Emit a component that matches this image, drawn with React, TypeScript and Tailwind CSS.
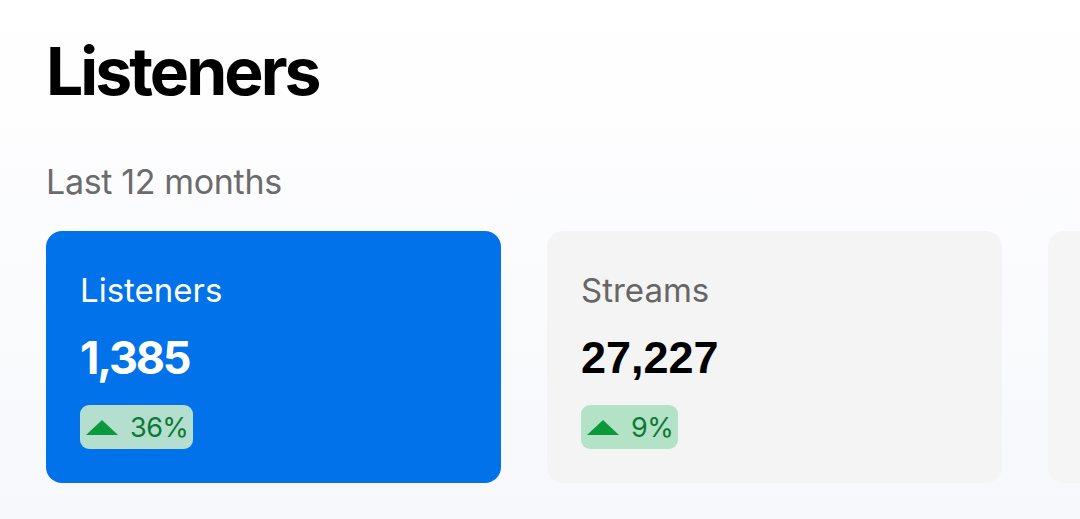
const stats = [
  { label: "Listeners", value: "1,385", change: "36%", active: true },
  { label: "Streams", value: "27,227", change: "9%", active: false },
];

function UpTriangle() {
  return (
    <svg width="32" height="15" viewBox="0 0 32 15" className="shrink-0">
      <path d="M16 0 L32 15 L0 15 Z" fill="#0a9a3c" />
    </svg>
  );
}

export default function App() {
  return (
    <div
      className="h-[519px] w-[1080px] overflow-hidden bg-gradient-to-b from-white to-[#f7f8fc] pl-[46px] pt-[38px]"
      style={{ fontFamily: "Inter, 'Noto Sans', sans-serif" }}
    >
      <h1 className="text-[66px] font-bold leading-none tracking-[-0.045em] text-black">
        Listeners
      </h1>

      <p className="mt-[58px] text-[34px] leading-[40px] tracking-[-0.01em] text-[#6b6b6b]">
        Last 12 months
      </p>

      <div className="mt-[29px] flex gap-[46px]">
        {stats.map((s) => (
          <div
            key={s.label}
            className={`h-[252px] w-[455px] shrink-0 rounded-[16px] pl-[34px] pt-[39px] ${
              s.active ? "bg-[#0172ea]" : "bg-[#f4f4f4]"
            }`}
          >
            <p
              className={`text-[33px] leading-[40px] ${
                s.active ? "text-white" : "text-[#666666]"
              }`}
            >
              {s.label}
            </p>

            {s.active ? (
              <p className="mt-[25px] text-[45px] font-bold leading-none tracking-[-0.05em] text-white">
                {s.value}
              </p>
            ) : (
              <p
                className="mt-[25px] text-[45px] font-bold leading-none text-black"
                style={{ fontFamily: "'Liberation Sans', Arial, sans-serif" }}
              >
                {s.value}
              </p>
            )}

            <div
              className={`mt-[25px] inline-flex h-[44px] items-center gap-[12px] rounded-[9px] pl-[6px] pr-[5px] ${
                s.active ? "bg-[#b4dfcf]" : "bg-[#b3e2c6]"
              }`}
            >
              <UpTriangle />
              <span className="text-[27px] leading-none tracking-[-0.02em] text-[#0b7a35]">
                {s.change}
              </span>
            </div>
          </div>
        ))}

        {/* third card, cut off at the edge */}
        <div className="h-[252px] w-[455px] shrink-0 rounded-[16px] bg-[#f5f5f6]" />
      </div>
    </div>
  );
}
